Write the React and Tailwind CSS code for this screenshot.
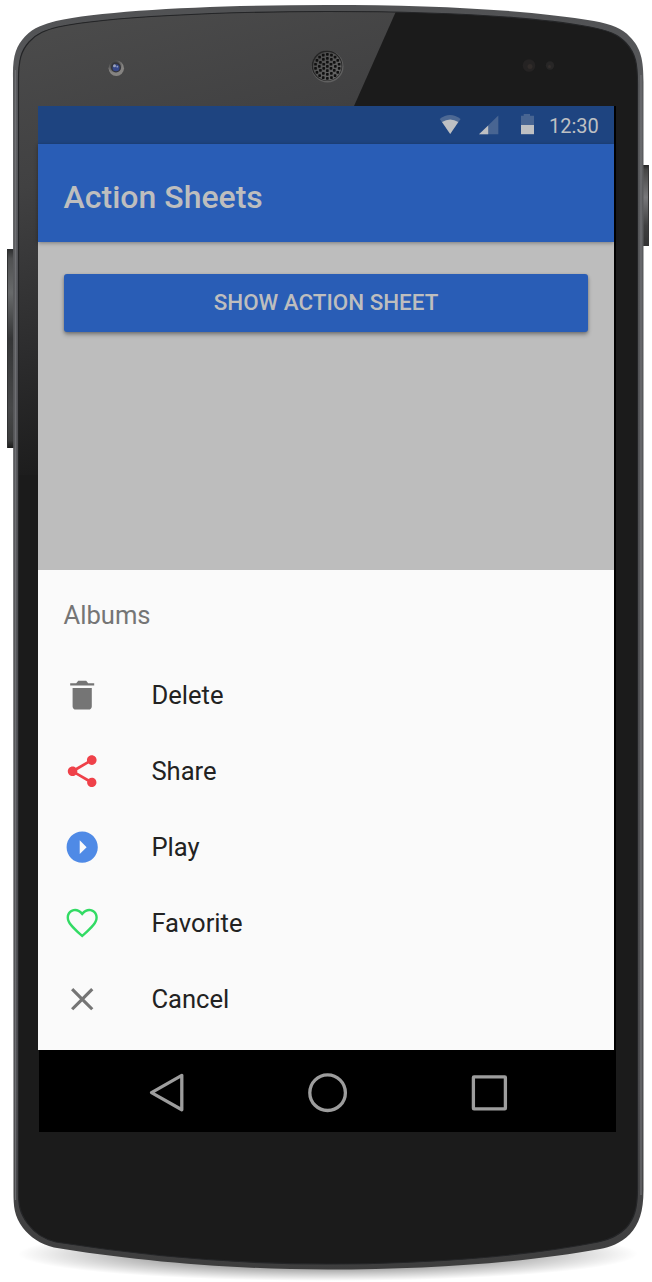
import React from "react";

const BODY =
  "M13 78C12.5 56 16 46 25 36.5C34 27 44 24.5 56 21C105 10 220 5 327 5C436 5 530 10 594 21C612 24.5 622 28 630 37C641 48 643.5 60 643.5 82V1190C643.5 1212 639 1224 630 1234C620 1244 610 1247 600 1249C530 1262 430 1269.5 328 1269.5C226 1269.5 130 1260 54 1247.5C40 1244 30 1237 23 1228C14 1216 13.5 1206 13.5 1192Z";
const FACE =
  "M18.5 80C18.5 60 21 51 29 42C37 33 46 30 58 27C105 17 220 11.5 327 11.5C436 11.5 530 16 590 27C608 30.5 618 34 626 43C636 54 637.5 64 637.5 84V1188C637.5 1209 634 1219 626 1228C617 1237 608 1240 598 1242C528 1256 430 1264 328 1264C226 1264 132 1254 56 1242C43 1239 34 1232 28 1224C19 1212 18.5 1204 18.5 1190Z";

const speakerHoles = [[0, 0]];
[
  [4.2, 6],
  [8, 12],
  [12, 18],
].forEach(([radius, count]) => {
  for (let i = 0; i < count; i++) {
    const angle = (i / count) * Math.PI * 2 + Math.PI / 2;
    speakerHoles.push([Math.cos(angle) * radius, Math.sin(angle) * radius]);
  }
});

function PhoneArtwork() {
  return (
    <svg className="col-start-1 row-start-1" width="652" height="1282" viewBox="0 0 652 1282" aria-hidden="true">
      <defs>
        <linearGradient id="rim" x1="0" y1="0" x2="0" y2="1282" gradientUnits="userSpaceOnUse">
          <stop offset="0" stopColor="#505153" />
          <stop offset="0.1" stopColor="#5c5d60" />
          <stop offset="0.85" stopColor="#4e4e51" />
          <stop offset="1" stopColor="#3c3c3c" />
        </linearGradient>
        <linearGradient id="glare" x1="60" y1="0" x2="190" y2="470" gradientUnits="userSpaceOnUse">
          <stop offset="0" stopColor="#4c4c4c" />
          <stop offset="0.35" stopColor="#414142" />
          <stop offset="0.7" stopColor="#2b2b2c" />
          <stop offset="0.95" stopColor="#1b1b1b" />
        </linearGradient>
        <linearGradient id="volume" x1="0" y1="249" x2="0" y2="448" gradientUnits="userSpaceOnUse">
          <stop offset="0" stopColor="#2c2d2e" />
          <stop offset="0.05" stopColor="#505152" />
          <stop offset="0.22" stopColor="#686a6b" />
          <stop offset="0.45" stopColor="#353637" />
          <stop offset="0.8" stopColor="#474849" />
          <stop offset="0.96" stopColor="#3c3d3d" />
          <stop offset="1" stopColor="#1b1b1b" />
        </linearGradient>
        <linearGradient id="power" x1="0" y1="165" x2="0" y2="246" gradientUnits="userSpaceOnUse">
          <stop offset="0" stopColor="#252525" />
          <stop offset="0.06" stopColor="#464646" />
          <stop offset="0.4" stopColor="#77777a" />
          <stop offset="0.75" stopColor="#404041" />
          <stop offset="1" stopColor="#333334" />
        </linearGradient>
        <radialGradient id="ground">
          <stop offset="0" stopColor="#000" stopOpacity="0.8" />
          <stop offset="0.55" stopColor="#000" stopOpacity="0.35" />
          <stop offset="1" stopColor="#000" stopOpacity="0" />
        </radialGradient>
        <radialGradient id="lens" cx="0.4" cy="0.3">
          <stop offset="0" stopColor="#292b30" />
          <stop offset="0.55" stopColor="#4c4c4c" />
          <stop offset="1" stopColor="#858381" />
        </radialGradient>
        <linearGradient id="mesh" x1="0" y1="0" x2="1" y2="1">
          <stop offset="0" stopColor="#434343" />
          <stop offset="1" stopColor="#6d6d6d" />
        </linearGradient>
        <clipPath id="faceClip">
          <path d={FACE} />
        </clipPath>
      </defs>

      <ellipse cx="328" cy="1254" rx="310" ry="27" fill="url(#ground)" />
      <rect x="7" y="249" width="8" height="199" fill="url(#volume)" />
      <path d="M7.5 249V448" stroke="#303132" strokeWidth="1" />
      <rect x="641" y="165" width="8" height="81" fill="url(#power)" />
      <path d="M648.5 165V246" stroke="#353536" strokeWidth="1" />

      <path d={BODY} fill="url(#rim)" />
      <path d="M15.5 70V1200M641 75V1195" stroke="#747579" strokeWidth="1.3" opacity="0.8" />
      <path d={FACE} fill="#1b1b1b" />
      <g clipPath="url(#faceClip)">
        <path d="M0 0H401L354 106L190 475H0Z" fill="url(#glare)" />
      </g>
      <path d={FACE} fill="none" stroke="#242527" strokeWidth="1.2" />

      <circle cx="116.3" cy="68.2" r="7.7" fill="url(#lens)" />
      <circle cx="116" cy="67.5" r="5" fill="#34353b" />
      <circle cx="116" cy="67.7" r="3.5" fill="#37488a" />
      <circle cx="114.5" cy="65.7" r="1.5" fill="#99a2bb" />
      <circle cx="117.3" cy="66.7" r="0.9" fill="#909cc0" />

      <circle cx="327.5" cy="66.5" r="16" fill="#606060" />
      <circle cx="327" cy="65.7" r="15.3" fill="#252525" />
      <circle cx="327.3" cy="66.3" r="14.2" fill="url(#mesh)" />
      {speakerHoles.map(([x, y], i) => (
        <rect key={i} x={326} y={65} width="2.7" height="2.7" rx="0.7" fill="#101010" transform={`translate(${x} ${y})`} />
      ))}

      <circle cx="529" cy="65.5" r="6.3" fill="#252323" />
      <circle cx="530" cy="66.5" r="2.5" fill="#312c2a" />
      <circle cx="550" cy="65.5" r="4.2" fill="#272626" />
      <circle cx="549.5" cy="66.5" r="1.5" fill="#342f2d" />
    </svg>
  );
}

function StatusBar() {
  return (
    <div className="flex h-[38px] shrink-0 items-center justify-end bg-[#1e4480] pr-[16px] text-[#bec0c3]">
      <svg width="98" height="38" viewBox="0 0 98 38" fill="currentColor" aria-hidden="true">
        <path d="M2.7 13Q13 5.2 23.6 13L13.2 27.8Z" opacity="0.3" />
        <path d="M5 16Q13.2 11 21.3 16L13.2 28Z" />
        <path d="M61.3 9.5V28.2H42.2Z" opacity="0.27" />
        <path d="M51.2 19.5V28.2H42Z" />
        <path d="M86.7 8H93V9.7H97V19H84V9.7H86.7Z" opacity="0.27" />
        <path d="M84 19H97V28.2H84Z" />
      </svg>
      <span className="ml-[14px] w-[49px] pt-[2px] text-[20px] leading-none whitespace-nowrap">12:30</span>
    </div>
  );
}

const actions = [
  {
    label: "Delete",
    color: "text-[#757575]",
    path: "M128 405.429C128 428.846 147.198 448 170.667 448h170.667C364.802 448 384 428.846 384 405.429V160H128v245.429zM416 96h-80l-26.785-32H202.786L176 96H96v32h320V96z",
  },
  {
    label: "Share",
    color: "text-[#ef4149]",
    path: "M383.822 344.427c-16.045 0-31.024 5.326-41.721 15.979l-152.957-88.42c1.071-5.328 2.142-9.593 2.142-14.919 0-5.328-1.071-9.593-2.142-14.919l150.826-87.35c11.762 10.653 26.741 17.041 43.852 17.041 35.295 0 64.178-28.766 64.178-63.92C448 72.767 419.117 44 383.822 44c-35.297 0-64.179 28.767-64.179 63.92 0 5.327 1.065 9.593 2.142 14.919l-150.821 87.35c-11.767-10.654-26.741-17.041-43.856-17.041-35.296 0-63.108 28.766-63.108 63.92 0 35.153 28.877 63.92 64.178 63.92 17.115 0 32.089-6.389 43.856-17.042l151.891 88.421c-1.076 4.255-2.141 8.52-2.141 13.847 0 34.094 27.806 61.787 62.037 61.787 34.229 0 62.036-27.693 62.036-61.787.001-34.094-27.805-61.787-62.035-61.787z",
  },
  {
    label: "Play",
    color: "text-[#4f8ae6]",
    path: "M464 256c0-114.875-93.125-208-208-208S48 141.125 48 256s93.125 208 208 208 208-93.125 208-208zM223 348V164l92 92z",
  },
  {
    label: "Favorite",
    color: "text-[#32db64]",
    path: "M349.6 64c-36.4 0-70.718 16.742-93.6 43.947C233.117 80.742 198.8 64 162.4 64 97.918 64 48 114.221 48 179.095c0 79.516 70.718 143.348 177.836 241.694L256 448l30.164-27.211C393.281 322.442 464 258.61 464 179.095 464 114.221 414.082 64 349.6 64zm-80.764 329.257l-4.219 3.873-8.617 7.773-8.616-7.772-4.214-3.869c-50.418-46.282-93.961-86.254-122.746-121.994C92.467 236.555 80 208.128 80 179.095c0-22.865 8.422-43.931 23.715-59.316C118.957 104.445 139.798 96 162.4 96c26.134 0 51.97 12.167 69.11 32.545L256 157.661l24.489-29.116C297.628 108.167 323.464 96 349.6 96c22.603 0 43.443 8.445 58.686 23.778C423.578 135.164 432 156.229 432 179.095c0 29.033-12.467 57.459-40.422 92.171-28.784 35.74-72.325 75.709-122.742 121.991z",
  },
  {
    label: "Cancel",
    color: "text-[#757575]",
    path: "M405 136.798L375.202 107 256 226.202 136.798 107 107 136.798 226.202 256 107 375.202 136.798 405 256 285.798 375.202 405 405 375.202 285.798 256z",
  },
];

function ActionSheet() {
  return (
    <section className="flex h-[480px] shrink-0 flex-col bg-[#fafafa]">
      <h2 className="flex h-[87px] items-center pt-[3px] pl-[25.5px] text-[25.6px] text-[#757575]">Albums</h2>
      <ul>
        {actions.map(({ label, color, path }) => (
          <li key={label}>
            <button className="flex h-[76px] w-full items-center pl-[24.6px] text-left text-[25.6px] text-[#222]">
              <svg className={`size-[38.4px] shrink-0 ${color}`} viewBox="0 0 512 512" fill="currentColor" fillRule="evenodd" aria-hidden="true">
                <path d={path} />
              </svg>
              <span className="ml-[50.4px]">{label}</span>
            </button>
          </li>
        ))}
      </ul>
    </section>
  );
}

function NavigationBar() {
  return (
    <nav className="ml-px flex h-[82px] w-[577px] shrink-0 bg-black">
      <svg width="577" height="82" viewBox="0 0 577 82" fill="none" stroke="#9d9d9d" strokeWidth="3.3" strokeLinejoin="round" aria-hidden="true">
        <path d="M112.5 42.6L142.8 25.4V59.8Z" />
        <circle cx="288.6" cy="42.7" r="17.8" />
        <rect x="434.4" y="26.8" width="32" height="32" rx="0.6" />
      </svg>
    </nav>
  );
}

export default function App() {
  return (
    <main className="grid h-[1282px] w-[652px] overflow-hidden bg-white font-['Roboto',sans-serif]">
      <PhoneArtwork />
      <div className="z-10 col-start-1 row-start-1 mt-[106px] ml-[38px] flex h-[1026px] w-[578px] flex-col">
        <div className="flex h-[944px] w-[578px] flex-col border-r-2 border-black bg-[#bdbdbd]">
          <StatusBar />
          <header className="flex h-[98px] shrink-0 items-center bg-[#295db6] pt-[8px] pl-[25.6px] shadow-[0_1px_4px_rgba(0,0,0,0.35)]">
            <h1 className="text-[32px] leading-none font-medium text-[#bebebe]">Action Sheets</h1>
          </header>
          <div className="flex-1 px-[26px] pt-[32px]">
            <button className="flex h-[58px] w-full items-center justify-center rounded-[3px] bg-[#295db6] text-[22.4px] font-medium text-[#bebebe] shadow-[0_3px_4px_rgba(0,0,0,0.26),0_1px_3px_rgba(0,0,0,0.22)]">
              SHOW ACTION SHEET
            </button>
          </div>
          <ActionSheet />
        </div>
        <NavigationBar />
      </div>
    </main>
  );
}
